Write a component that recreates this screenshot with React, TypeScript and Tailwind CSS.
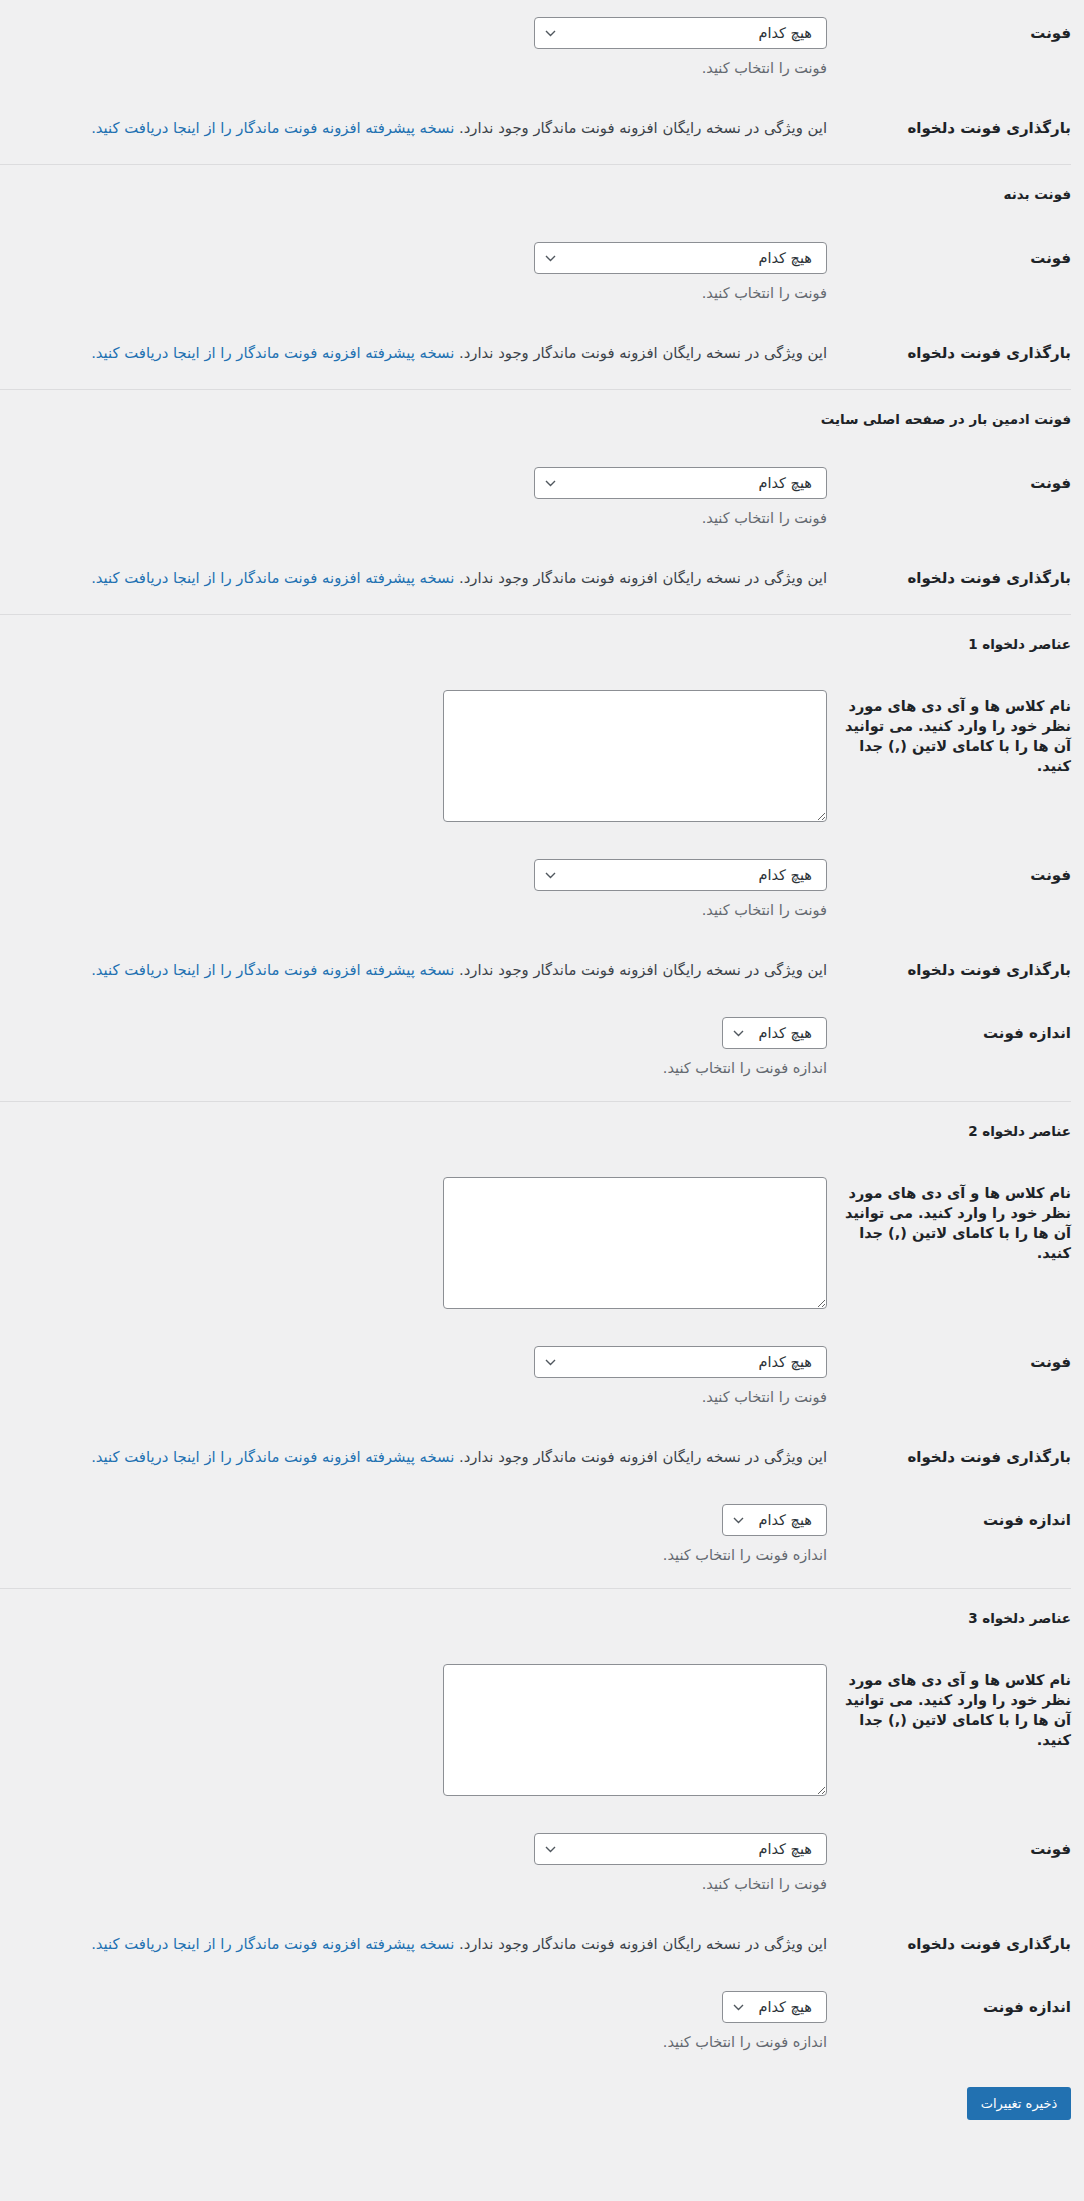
import React from 'react'

const SELECT_NOTE = 'فونت را انتخاب کنید.'
const SIZE_NOTE = 'اندازه فونت را انتخاب کنید.'

function Chevron() {
    return (
        <svg width="11" height="7" viewBox="0 0 11 7" fill="none" className="shrink-0">
            <path d="M1 1l4.5 4.5L10 1" stroke="#50575e" strokeWidth="1.4" />
        </svg>
    )
}

function SelectBox({ small = false }: { small?: boolean }) {
    return (
        <div
            className={`flex h-[32px] items-center justify-between rounded-[4px] border border-[#8c8f94] bg-white pr-[14px] pl-[10px] text-[14.5px] text-[#2c3338] ${small ? 'w-[105px]' : 'w-[293px]'}`}
        >
            <span>هیچ کدام</span>
            <Chevron />
        </div>
    )
}

function SelectRow({ label, note, small = false }: { label: string; note: string; small?: boolean }) {
    return (
        <div className="grid grid-cols-[244px_1fr]">
            <div className="pt-[23px] pe-[12px] text-[15px] font-bold">{label}</div>
            <div className="pt-[17px] pb-[17px]">
                <SelectBox small={small} />
                <p className="mt-[9px] text-[14.5px] text-[#646970]">{note}</p>
            </div>
        </div>
    )
}

// tight: row followed by another row rather than a divider
function UploadRow({ tight = false }: { tight?: boolean }) {
    return (
        <div className={`grid grid-cols-[244px_1fr] ${tight ? 'pb-[20px]' : 'pb-[22px]'}`}>
            <div className="pt-[23px] pe-[12px] text-[15px] font-bold">بارگذاری فونت دلخواه</div>
            <p className="pt-[23px] text-[14.8px] text-[#3c434a]">
                این ویژگی در نسخه رایگان افزونه فونت ماندگار وجود ندارد.{' '}
                <a href="#" className="text-[#2271b1]">
                    نسخه پیشرفته افزونه فونت ماندگار را از اینجا دریافت کنید.
                </a>
            </p>
        </div>
    )
}

function TextareaRow() {
    return (
        <div className="grid grid-cols-[244px_1fr]">
            <div className="pt-[21px] text-[14.5px] font-bold whitespace-nowrap">
                <span className="block">نام کلاس ها و آی دی های مورد</span>
                <span className="block">نظر خود را وارد کنید. می توانید</span>
                <span className="block">آن ها را با کامای لاتین (,) جدا</span>
                <span className="block">کنید.</span>
            </div>
            <div className="pt-[15px] pb-[20px]">
                <textarea
                    dir="ltr"
                    className="block h-[132px] w-[384px] rounded-[4px] border border-[#8c8f94] bg-white"
                />
            </div>
        </div>
    )
}

function Divider({ wide = false }: { wide?: boolean }) {
    return <hr className={`border-[#dcdcde] ${wide ? 'mt-[6px]' : 'mt-[4px]'}`} />
}

function Heading({ children }: { children: React.ReactNode }) {
    return <h2 className="mt-[19px] mb-[21px] text-[13.5px] font-bold">{children}</h2>
}

function CustomSection({ n }: { n: number }) {
    return (
        <>
            <Heading>عناصر دلخواه {n}</Heading>
            <TextareaRow />
            <SelectRow label="فونت" note={SELECT_NOTE} />
            <UploadRow tight />
            <SelectRow label="اندازه فونت" note={SIZE_NOTE} small />
        </>
    )
}

export default function App() {
    return (
        <div
            dir="rtl"
            className="min-h-screen bg-[#f0f0f1] font-['DejaVu_Sans',sans-serif] text-[14px] leading-[20px] text-[#1d2327]"
        >
            <div className="mr-[13px]">
                <SelectRow label="فونت" note={SELECT_NOTE} />
                <UploadRow />
                <Divider />

                <Heading>فونت بدنه</Heading>
                <SelectRow label="فونت" note={SELECT_NOTE} />
                <UploadRow />
                <Divider />

                <Heading>فونت ادمین بار در صفحه اصلی سایت</Heading>
                <SelectRow label="فونت" note={SELECT_NOTE} />
                <UploadRow />
                <Divider />

                <CustomSection n={1} />
                <Divider wide />
                <CustomSection n={2} />
                <Divider wide />
                <CustomSection n={3} />

                <div className="mt-[18px]">
                    <button className="h-[33px] w-[104px] rounded-[3px] bg-[#2271b1] text-[13px] text-white">
                        ذخیره تغییرات
                    </button>
                </div>
            </div>
        </div>
    )
}
